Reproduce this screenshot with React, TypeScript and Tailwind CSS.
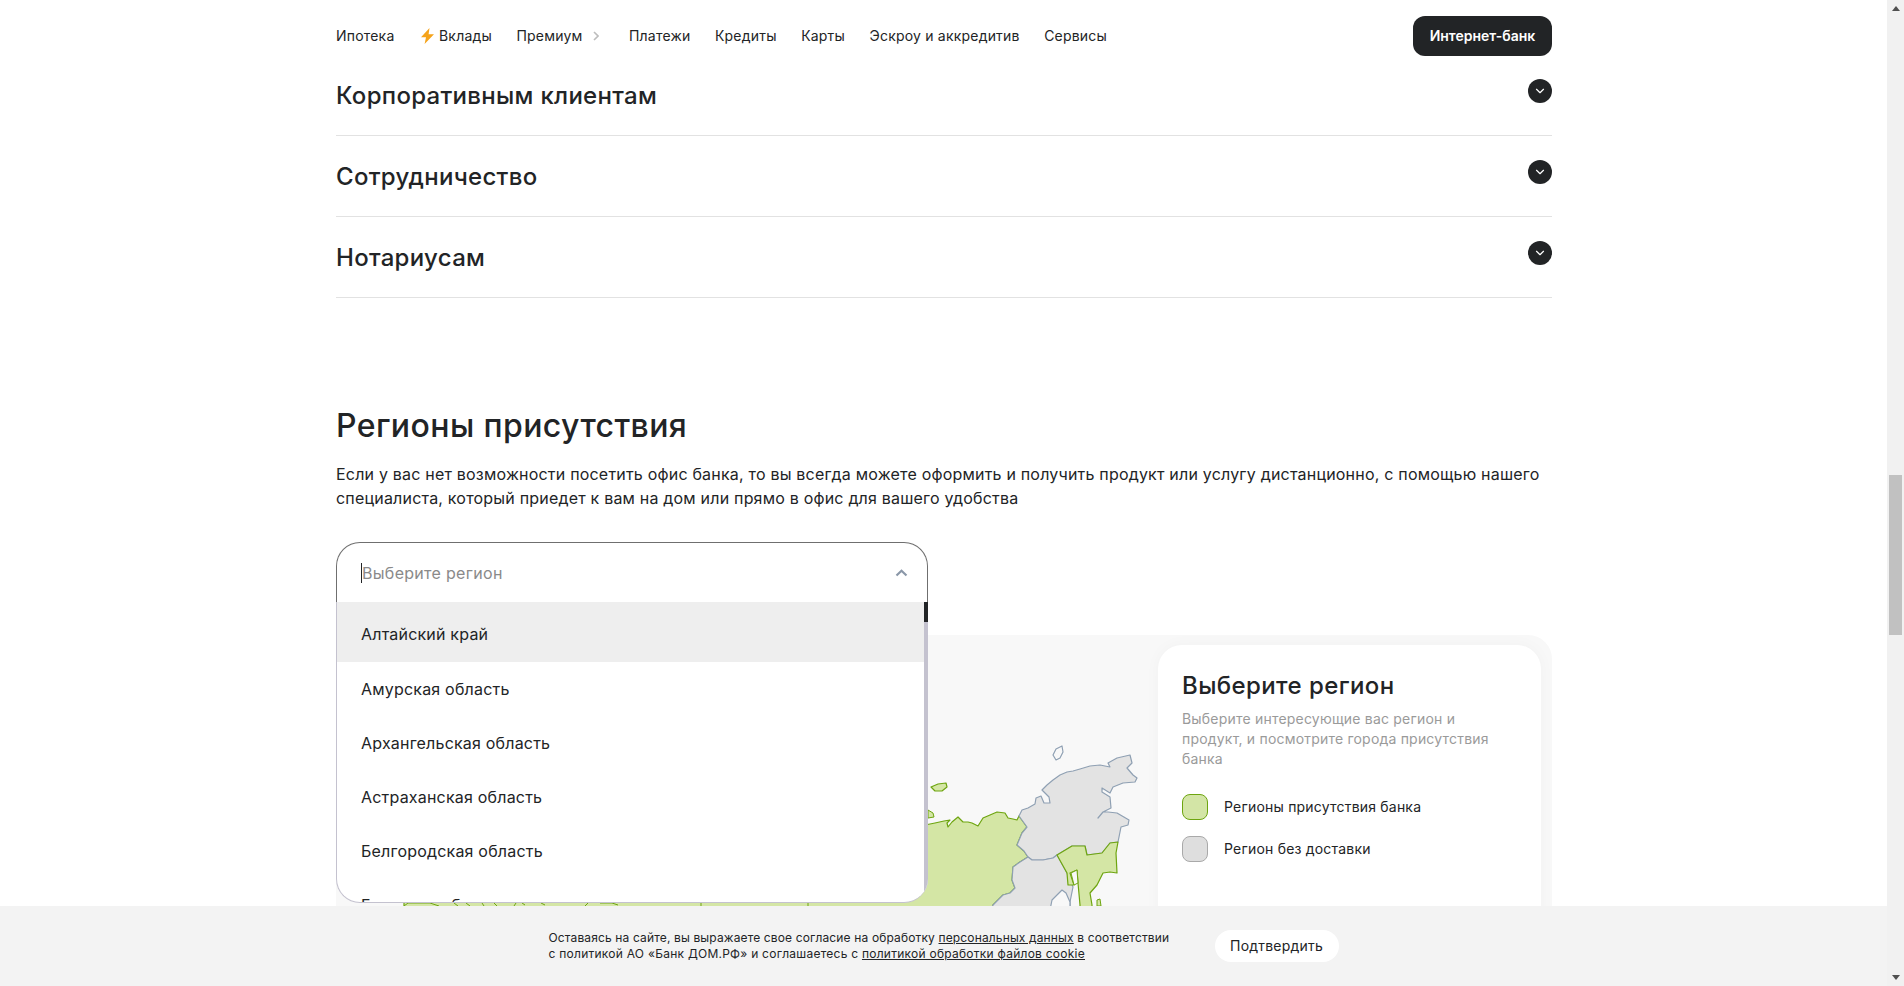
import { ChevronDown } from "lucide-react";

const NAV_ITEMS = ["Платежи", "Кредиты", "Карты", "Эскроу и аккредитив", "Сервисы"];
const ACCORDION = ["Корпоративным клиентам", "Сотрудничество", "Нотариусам"];
const REGIONS = ["Амурская область", "Архангельская область", "Астраханская область", "Белгородская область", "Брянская область"];

function RussiaMap() {
    return (
        <svg viewBox="336 635 822 300" className="w-full h-[300px] block" fill="none" strokeLinejoin="round">
            {/* Main green part */}
            <path
                d="M404 930L404 800L600 720L920 720L920 826L935 823L944 821L950 820L947 823L948 827L952 822L958 817L963 822L968 822L972 823L978 826L983 818L990 815L997 812L1005 813L1008 818L1013 819L1017 820L1019 816L1027 827L1022 833L1017 845L1024 851L1028 857L1020 862L1013 867L1012 880L1015 888L1010 893L1003 895L993 905L990 930Z"
                fill="#d4e6a5"
                stroke="#6ea510"
                strokeWidth="1.2"
            />
            {/* Gray regions */}
            <path
                d="M1019 816L1022 810L1028 808L1035 804L1036 798L1041 796L1044 803L1050 803L1049 797L1042 790L1047 785L1053 780L1060 775L1067 772L1073 771L1080 769L1090 766L1100 765L1110 767L1108 763L1117 758L1130 755L1132 763L1127 768L1133 775L1137 778L1135 782L1123 783L1113 787L1110 793L1102 788L1102 792L1110 797L1111 808L1103 812L1098 818L1103 812L1108 812L1117 813L1129 820L1128 825L1121 827L1118 842L1110 843L1102 853L1087 855L1085 846L1072 846L1057 855L1053 858L1043 860L1032 860L1028 857L1024 851L1017 845L1022 833L1027 827Z"
                fill="#e3e3e3"
                stroke="#8fa0b3"
                strokeWidth="1.2"
            />
            <path
                d="M1028 857L1032 860L1043 860L1053 858L1057 855L1067 873L1073 887L1070 902L1070 930L985 930L993 905L1003 895L1010 893L1015 888L1012 880L1013 867L1020 862Z"
                fill="#e3e3e3"
                stroke="#8fa0b3"
                strokeWidth="1.2"
            />
            <path d="M1050 910L1052 900L1058 894L1062 890L1066 893L1070 902L1070 930L1050 930Z" fill="#f8f8f8" stroke="#8fa0b3" strokeWidth="1.2" />
            {/* Eastern green part */}
            <path
                d="M1057 855L1072 846L1085 846L1087 855L1102 853L1110 843L1118 842L1116 853L1117 873L1110 872L1103 873L1097 885L1090 893L1092 905L1092 930L1080 930L1080 905L1078 883L1077 870L1070 873L1074 885L1068 885L1067 873Z"
                fill="#d4e6a5"
                stroke="#6ea510"
                strokeWidth="1.2"
            />
            <path d="M1071 873L1077 870L1078 883L1074 885Z" fill="#f8f8f8" stroke="#6ea510" strokeWidth="1" />
            <path d="M1097 900L1100 899L1101 906L1097 906Z" fill="#d4e6a5" stroke="#6ea510" strokeWidth="1" />
            {/* Islands */}
            <path d="M931 787L938 784L946 783L947 787L942 791L935 791Z" fill="#d4e6a5" stroke="#6ea510" strokeWidth="1.2" />
            <path d="M928 810L933 813L934 817L928 818Z" fill="#d4e6a5" stroke="#6ea510" strokeWidth="1" />
            <path d="M1053 755L1056 749L1062 746L1063 752L1060 758L1056 760Z" fill="none" stroke="#8fa0b3" strokeWidth="1.2" />
            {/* Borders under the dropdown */}
            <path
                d="M404 906L408 903L420 903L430 903L439 906M454 903L458 906M466 903L470 906M482 903L484 906M494 903L497 906M514 906L516 903M522 903L525 905M541 903L545 905M585 906L588 903M600 903L612 903L618 905M701 903L701 906M808 903L808 906"
                stroke="#6ea510"
                strokeWidth="1"
            />
        </svg>
    );
}

export default function App() {
    return (
        <div className="h-[986px] w-full flex overflow-hidden bg-white text-[#222426] tracking-[0.2px] font-['Inter','Noto_Sans',sans-serif]">
            <div className="relative flex-1 h-full overflow-hidden">
                {/* Header */}
                <header className="h-[72px] mx-[336px] w-[1216px] flex items-center justify-between">
                    <nav className="flex items-center gap-[24.5px] text-sm -mt-[1px]">
                        <span>Ипотека</span>
                        <span className="flex items-center gap-[5px] ml-0.5">
                            <svg width="13" height="16" viewBox="0 0 13 16">
                                <path d="M8.5 0L0 9.2H5L3.6 16L13 6.2H7.6Z" fill="#f5a31a" />
                            </svg>
                            Вклады
                        </span>
                        <span className="flex items-center gap-2.5 pr-1.5">
                            Премиум
                            <svg width="6" height="10" viewBox="0 0 6 10" fill="none">
                                <path d="M1 1L5 5L1 9" stroke="#bdbdbd" strokeWidth="1.6" />
                            </svg>
                        </span>
                        {NAV_ITEMS.map((item) => (
                            <span key={item}>{item}</span>
                        ))}
                    </nav>
                    <button className="h-10 w-[139px] rounded-xl bg-[#222426] text-white text-sm font-semibold tracking-normal">
                        Интернет-банк
                    </button>
                </header>

                <main className="w-[1216px] ml-[336px]">
                    {/* Accordion */}
                    <div>
                        {ACCORDION.map((title, i) => (
                            <div
                                key={title}
                                className={`flex justify-between border-b border-[#e2e2e2] ${i === 0 ? "h-[64px]" : "h-[81px] pt-[24px]"}`}
                            >
                                <span className={`text-2xl leading-8 font-medium tracking-[0.3px] ${i === 0 ? "pt-[8px]" : "pt-px"}`}>{title}</span>
                                <span className={`w-6 h-6 rounded-full bg-[#222426] flex items-center justify-center ${i === 0 ? "mt-[7px]" : ""}`}>
                                    <ChevronDown size={14} color="#fff" />
                                </span>
                            </div>
                        ))}
                    </div>

                    {/* Regions */}
                    <section className="pt-[108px]">
                        <h2 className="text-[32px] leading-10 font-medium tracking-[0.4px]">Регионы присутствия</h2>
                        <p className="mt-[16px] text-base leading-6">
                            Если у вас нет возможности посетить офис банка, то вы всегда можете оформить и получить продукт или услугу дистанционно, с помощью нашего специалиста, который приедет к вам на дом или прямо в офис для вашего удобства
                        </p>

                        <div className="relative mt-[32px] w-[592px] z-10">
                            <div className="h-[60px] border border-b-0 border-[#6f6f6f] rounded-t-[24px] bg-white pl-6 pr-[19px] flex items-center justify-between">
                                <span className="flex items-center text-base text-[#8a8a8a] tracking-[0.3px]">
                                    <span className="w-px h-5 bg-[#222426]" />
                                    Выберите регион
                                </span>
                                <svg width="13" height="8" viewBox="0 0 13 8" fill="none">
                                    <path d="M1.5 6.5L6.5 1.8L11.5 6.5" stroke="#8a97a8" strokeWidth="2.2" />
                                </svg>
                            </div>
                            <div className="absolute top-full left-0 right-0 h-[301px] flex overflow-hidden bg-white border-b border-l border-[#c4c2cf] rounded-b-[24px]">
                                <ul className="flex-1 overflow-hidden text-base">
                                    <li className="h-[60px] pl-6 pt-1 flex items-center bg-[#eeeeee]">Алтайский край</li>
                                    {REGIONS.map((region) => (
                                        <li key={region} className="h-[54px] pl-6 flex items-center">{region}</li>
                                    ))}
                                </ul>
                                <div className="w-1 bg-[#c4c2cf]">
                                    <div className="h-5 bg-[#222426]" />
                                </div>
                            </div>
                        </div>

                        <div className="mt-[33px] h-[500px] rounded-[24px] bg-[#f8f8f8] flex pt-[10px] pr-[11px] overflow-hidden">
                            <div className="flex-1 -mt-[10px]">
                                <RussiaMap />
                            </div>
                            <div className="w-[383px] h-[480px] rounded-[24px] bg-white shadow-[0_0_16px_rgba(0,0,0,0.03)] p-6">
                                <h3 className="text-2xl leading-8 font-medium tracking-[0.4px] mt-[1px]">Выберите регион</h3>
                                <p className="mt-[7px] w-[320px] text-sm leading-5 text-[#9a9a9a]">
                                    Выберите интересующие вас регион и продукт, и посмотрите города присутствия банка
                                </p>
                                <div className="mt-[25px] flex flex-col gap-4 text-sm">
                                    <div className="flex items-center gap-4">
                                        <span className="w-[26px] h-[26px] rounded-lg bg-[#d3e5a6] border border-[#6ea510]" />
                                        Регионы присутствия банка
                                    </div>
                                    <div className="flex items-center gap-4">
                                        <span className="w-[26px] h-[26px] rounded-lg bg-[#dedede] border border-[#a9a9a9]" />
                                        Регион без доставки
                                    </div>
                                </div>
                            </div>
                        </div>
                    </section>
                </main>

                {/* Cookie bar */}
                <div className="absolute bottom-0 left-0 right-0 z-20 h-20 bg-[#f3f3f3] flex items-center justify-center gap-[44px]">
                    <p className="text-xs leading-4 w-[622px] tracking-[0.14px]">
                        Оставаясь на сайте, вы выражаете свое согласие на обработку <u>персональных данных</u> в соответствии
                        <br />
                        <span className="tracking-[0.25px]">
                            с политикой АО «Банк ДОМ.РФ» и соглашаетесь с <u>политикой обработки файлов cookie</u>
                        </span>
                    </p>
                    <button className="h-8 w-[124px] rounded-full bg-white text-sm">Подтвердить</button>
                </div>
            </div>

            {/* Window scrollbar */}
            <div className="w-[17px] h-full bg-[#f1f1f1] flex flex-col items-center">
                <div className="h-[17px] flex items-center justify-center">
                    <svg width="8" height="5" viewBox="0 0 8 5"><path d="M4 0L8 5H0Z" fill="#505050" /></svg>
                </div>
                <div className="w-[13px] h-40 bg-[#c1c1c1] mt-[458px]" />
                <div className="h-[17px] mt-auto flex items-center justify-center">
                    <svg width="8" height="5" viewBox="0 0 8 5"><path d="M0 0H8L4 5Z" fill="#505050" /></svg>
                </div>
            </div>
        </div>
    );
}
